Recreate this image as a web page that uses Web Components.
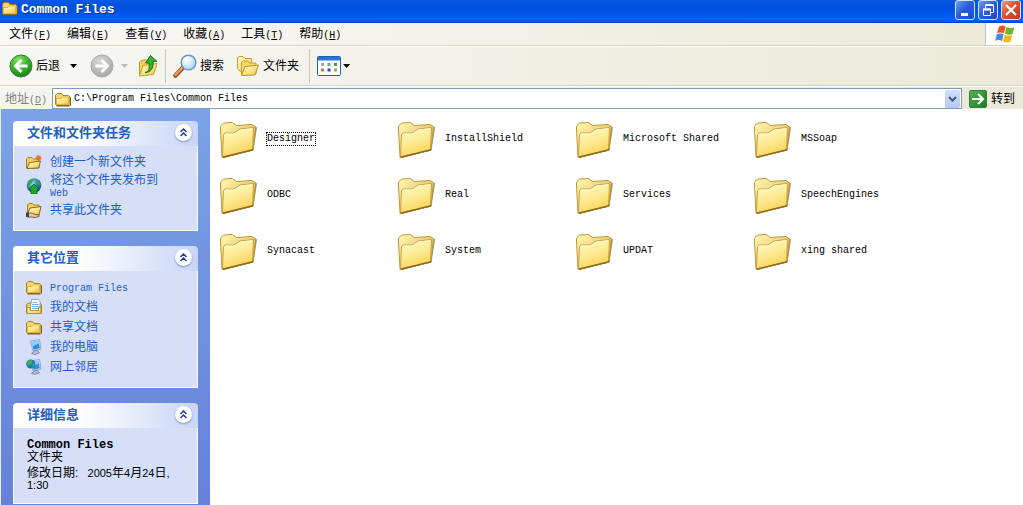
<!DOCTYPE html>
<html lang="zh-CN">
<head>
<meta charset="utf-8">
<title>Common Files</title>
<style>
  body { margin: 0; background: #fff; font: 12px/12px "Liberation Sans", "Noto Sans CJK SC", sans-serif; color: #000; }
</style>
</head>
<body>
<xp-window></xp-window>

<script>
const base = `
  * { box-sizing: border-box; }
  button { font: inherit; color: inherit; background: none; border: 0; padding: 0; margin: 0; }
  a { color: inherit; text-decoration: none; }
  .m { font: 10px/1px "Liberation Mono", monospace; }
`;

function define(name, css, html) {
  customElements.define(name, class extends HTMLElement {
    constructor() {
      super();
      const root = this.attachShadow({ mode: 'open' });
      const view = typeof html === 'function' ? html(this) : html;
      root.innerHTML = `<style>${base}${css}</style>${view}`;
    }
  });
}

/* ---------- icon library ---------- */
const yellow = `<linearGradient id="y" x1="0" y1="0" x2="1" y2="1"><stop offset="0" stop-color="#fffbc8"/><stop offset=".5" stop-color="#fbe58a"/><stop offset="1" stop-color="#efc04a"/></linearGradient>`;
const smallFolder = `<path d="M.5 13.500V4.200L2 2.500h4.500L8 4.500h5.500L15 6v7.500l-1 1H1.500z" fill="#f6d66a" stroke="#a8801c"/><path d="M1.500 13.500V7.500h4.500l1.500-1.500h6V13.500z" fill="url(#y)" stroke="#d5a83a" stroke-width=".8"/><path d="M1.500 15H14.500l1-1V6.500" fill="none" stroke="#75591a"/>`;
const computer = `<path d="M4.500 2l9-1.500 1.500 9.500-8 2z" fill="#dfe8f5" stroke="#8796b5" stroke-width=".8"/><path d="M5.800 3l6.800-1.200 1.200 7.400-6.300 1.500z" fill="#2a8be8"/><path d="M5.800 3l6.800-1.200.4 2.500L6.500 7.500z" fill="#8fd0ff"/><path d="M8.500 12l3-.8 1 1.500 1 1.300-5 1.500-3-1.200z" fill="#b9bdd2" stroke="#686f92" stroke-width=".7"/>`;
const icons = {
  folder: [16, 16, yellow + smallFolder],
  bigFolder: [38, 38, `
    <linearGradient id="b" x1="0" y1="0" x2=".4" y2="1"><stop offset="0" stop-color="#fffbc4"/><stop offset=".5" stop-color="#ffed9b"/><stop offset="1" stop-color="#f9d45c"/></linearGradient>
    <linearGradient id="k" x1="0" y1="0" x2="1" y2="1"><stop offset="0" stop-color="#fff9b4"/><stop offset="1" stop-color="#dca93a"/></linearGradient>
    <path d="M4 38L34.500 30.500L38 7.500L36 6L34 28z" fill="#6c6140" opacity=".65"/>
    <path d="M3 37L1.500 10V6.500L4.500 3L13.500 2.500L17.500 5.500L33 4.500L36.500 7L34 29.500L5 37.500z" fill="url(#k)" stroke="#b28d2c" stroke-width=".9"/>
    <path d="M3.500 37L4.500 15L6 13H15L21 9L34.500 7.500L33.500 30z" fill="url(#b)" stroke="#c59a33" stroke-width=".9"/>
    <path d="M5.500 15.500L6.500 14H15.500L21.500 10L33 8.800" fill="none" stroke="#fffde0"/>
    <path d="M3.500 37.200L33 30L34 29" fill="none" stroke="#8c6c1c" stroke-width="1.400"/>`],
  back: [24, 24, `
    <radialGradient id="g" cx=".4" cy=".25" r=".8"><stop offset="0" stop-color="#8be26b"/><stop offset=".5" stop-color="#3eb42c"/><stop offset="1" stop-color="#15791a"/></radialGradient>
    <circle cx="12" cy="12" r="11" fill="url(#g)" stroke="#35843a"/><path d="M18.500 12H7M12.500 6L6.500 12l6 6" fill="none" stroke="#fff" stroke-width="2.800"/>`],
  forward: [24, 24, `
    <radialGradient id="g" cx=".4" cy=".3" r=".8"><stop offset="0" stop-color="#d8d8d6"/><stop offset="1" stop-color="#a3a3a1"/></radialGradient>
    <circle cx="12" cy="12" r="11" fill="url(#g)" stroke="#aaa"/><path d="M5.500 12H17M11.500 6l6 6-6 6" fill="none" stroke="#fff" stroke-width="2.800"/>`],
  up: [20, 24, yellow + `
    <path d="M1.500 21V8l3-2h4l2 2h5v12z" fill="#f3cf5c" stroke="#c59a33"/><path d="M1.500 22L5 11.500l14-2L15.500 20.500z" fill="url(#y)" stroke="#c99c30"/>
    <path d="M7 18.500c4-.5 4.500-4 4-9.500H7.500L12.500 1.500l6.500 6h-4c.5 7-2 11-8 11z" fill="#35b52c" stroke="#187516"/>`],
  search: [24, 24, `
    <radialGradient id="l" cx=".4" cy=".35" r=".7"><stop offset="0" stop-color="#fff"/><stop offset="1" stop-color="#a5d6f8"/></radialGradient>
    <path d="M2.500 21.500L10 13.500" stroke="#8f4f27" stroke-width="4.500" stroke-linecap="round"/><path d="M2.500 20.800L9.500 13.500" stroke="#eb9a5c" stroke-width="2.500" stroke-linecap="round"/>
    <circle cx="15.500" cy="8.500" r="7.300" fill="url(#l)" stroke="#6f93c4" stroke-width="1.500"/><path d="M10.500 7q1.500-3.500 5-3.500" fill="none" stroke="#fff" stroke-width="1.500"/>`],
  folders: [24, 24, yellow + `
    <path d="M1.500 15V4L3 2.500h4l2 2h6.500V15L5 18z" fill="url(#y)" stroke="#c99c30"/>
    <path d="M5.500 20.500V8.500L7 7h4.500l2 2H20v11z" fill="#f7d869" stroke="#c99c30"/><path d="M5.500 21.500L9 12.500l13.500-1.500-3.500 10z" fill="url(#y)" stroke="#c0922a"/>`],
  views: [24, 20, `
    <rect x=".5" y=".5" width="23" height="19" rx="1" fill="#fff" stroke="#1c5fb5"/><path d="M1 1h22v3.500H1z" fill="#2b74d6"/>
    <path d="M4 7h3v3H4z" fill="#93a8c8"/><path d="M10.500 7h3v3h-3z" fill="#7aa98a"/><path d="M17 7h3v3h-3z" fill="#38a048"/>
    <path d="M4 12.500h3v3H4z" fill="#e0684e"/><path d="M10.500 12.500h3v3h-3z" fill="#1e4fa8"/><path d="M17 12.500h3v3h-3z" fill="#c0a02c"/>`],
  go: [18, 18, `
    <linearGradient id="g" x1="0" y1="0" x2="1" y2="1"><stop offset="0" stop-color="#54b655"/><stop offset="1" stop-color="#167b1e"/></linearGradient>
    <rect x=".5" y=".5" width="17" height="17" rx="1.500" fill="url(#g)" stroke="#2f8038"/><path d="M3 9h10M9 4l5 5-5 5" fill="none" stroke="#fff" stroke-width="2.200"/>`],
  flag: [20, 18, `
    <path d="M4 1.500q4-2 6.500.2L9 8.500Q6 6.500 2 8.200z" fill="#e8562a"/><path d="M11.500 2q3.500 2 8 .2L17.500 9q-4 1.500-7.500-.2z" fill="#6fb52c"/>
    <path d="M1.700 9.500q4-2 6.900 0L7 16Q4 14.200.2 15.800z" fill="#4a8be0"/><path d="M9.700 9.800q3.500 1.800 7.500.3L15.500 16.800q-4 1.500-7.500-.4z" fill="#f5b81c"/>`],
  newFolder: [16, 16, yellow + `
    <path d="M.5 14V5L2 3.500h4L7.500 5H13v9z" fill="#f3cf5c" stroke="#a8801c"/><path d="M1 14.500L3.500 8.500l11-1.500-2 7z" fill="url(#y)" stroke="#8c6a18"/>
    <path d="M12.500 1v6M9.500 4h6M10.500 2l4 4M14.500 2l-4 4" stroke="#f0722a" stroke-width="1.300"/>`],
  publish: [16, 16, `
    <radialGradient id="o" cx=".35" cy=".3" r=".8"><stop offset="0" stop-color="#b5ecff"/><stop offset=".45" stop-color="#3188c7"/><stop offset="1" stop-color="#123d80"/></radialGradient>
    <circle cx="8" cy="7.500" r="7.300" fill="url(#o)"/><path d="M1 7q1-5 5-6l2 1-2 3-3 3zM10 1.500q4 1 5 6l-3-1z" fill="#36a848"/>
    <path d="M8 6l5.500 5.500H11V16H5v-4.500H2.500z" fill="#22a62c" stroke="#0b6b18" stroke-width=".8"/>`],
  share: [16, 16, yellow + `
    <path d="M1.500 11V3L3 1.500h3.500L8 3h5v8z" fill="#f3cf5c" stroke="#a8801c"/><path d="M1.500 12L4 6l11-1.500-2 8.500z" fill="url(#y)" stroke="#8c6a18"/>
    <path d="M1 11h5l3 1.500 4 .5v1.500l-4 1-4-.5H1z" fill="#f0c8a0" stroke="#5d4632" stroke-width=".8"/><path d="M0 10.500h3V15H0z" fill="#3c4552"/>`],
  docs: [16, 16, yellow + `
    <path d="M.5 14V5.500L3 4h11l1.500 2v8z" fill="#f3cf5c" stroke="#a8801c"/><path d="M5.500 .5h6.500l2 2v10H4z" fill="#fff" stroke="#6e93bd" stroke-width=".8"/>
    <path d="M6.500 3.500h5M6 5.500h6.500M6 7.500h6.500M6 9.500h6" stroke="#77b0e2"/><path d="M1 14.500V8.500h3v3h8.500v-3H15v6z" fill="url(#y)" stroke="#a8801c" stroke-width=".8"/>`],
  computer: [16, 16, computer],
  network: [16, 16, computer + `<circle cx="4.800" cy="5" r="4.600" fill="#2275bd"/><path d="M1 4q2-4 4.500-3l1 2-2 3-2.500.5zM6.500 5l2.500 0-2 4z" fill="#3cb54a"/>`],
};
customElements.define('xp-icon', class extends HTMLElement {
  connectedCallback() {
    if (this.shadowRoot) return;
    const [w, h, art] = icons[this.getAttribute('name')];
    this.attachShadow({ mode: 'open' }).innerHTML =
      `<style>:host{display:block;flex:none}svg{display:block}</style><svg width="${w}" height="${h}" viewBox="0 0 ${w} ${h}" aria-hidden="true">${art}</svg>`;
  }
});

/* ---------- title bar ---------- */
define('xp-titlebar', `
  :host { display: flex; align-items: flex-start; height: 23px; padding: 0 2px;
    background: linear-gradient(#0a5ae8 0, #0150dd 30%, #0257f0 65%, #0162fb 88%, #0140c4 100%); }
  h1 { flex: 1; margin: 0; padding: 4px 0 0 3px; font: bold 13px/12px "Liberation Mono", monospace; color: #fff; text-shadow: 1px 1px #0a2f8c; }
  .box { display: flex; gap: 3px; }
  button { width: 20px; height: 20px; border: 1px solid #d5e2fb; border-radius: 3px; background: linear-gradient(135deg, #6f9bf5, #2a5ede 45%, #1d49c8); }
  button.x { background: linear-gradient(135deg, #ee9c80, #dc5130 45%, #c03a18); }
  svg { display: block; margin: 0 1px; }`, `
  <xp-icon name="folder"></xp-icon><h1>Common Files</h1>
  <div class="box">
    <button aria-label="最小化"><svg width="16" height="18"><path d="M4 12h7v3H4z" fill="#fff"/></svg></button>
    <button aria-label="还原"><svg width="16" height="18" fill="none" stroke="#fff"><path d="M5.500 7V4.500h8v7H11M5.500 3.500h8M3.500 8h7v6.500h-7z"/><path d="M3 8.500h8" stroke-width="2"/></svg></button>
    <button class="x" aria-label="关闭"><svg width="16" height="18"><path d="M3 4l10 10M13 4L3 14" stroke="#fff" stroke-width="2.200"/></svg></button>
  </div>`);

/* ---------- menu bar ---------- */
define('xp-menubar', `
  :host { display: flex; height: 23px; border-bottom: 1px solid #d8d2bd; background: linear-gradient(90deg, #f9f9f7, #ece9d8); }
  nav { flex: 1; display: flex; gap: 16px; padding-left: 9px; align-items: center; }
  button { white-space: nowrap; }
  .logo { width: 38px; display: grid; place-items: center; background: #fff; border-left: 1px solid #c9c5b2; }`,
  `<nav>${[['文件','F'],['编辑','E'],['查看','V'],['收藏','A'],['工具','T'],['帮助','H']]
    .map(([t, k]) => `<button>${t}<span class="m">(<u>${k}</u>)</span></button>`).join('')}</nav>
  <div class="logo"><xp-icon name="flag"></xp-icon></div>`);

/* ---------- toolbar ---------- */
define('xp-toolbar', `
  :host { display: flex; align-items: center; height: 40px; padding-left: 9px; border-top: 1px solid #fff; border-bottom: 1px solid #d8d2bd;
    background: linear-gradient(90deg, #f7f7f4, #ece9d8); }
  button { display: flex; align-items: center; gap: 3px; white-space: nowrap; }
  .drop { width: 7px; height: 4px; background: #000; clip-path: polygon(0 0, 100% 0, 50% 100%); }
  .after { margin: 0 13px 0 10px; }
  .off { background: #bbb; margin: 0 10px 0 7px; }
  hr { width: 1px; height: 34px; margin: 0 7px; border: 0; background: #cbc7b4; }
  .folders { margin: 0 3px 0 12px; }
  .views { gap: 2px; }`, `
  <button><xp-icon name="back"></xp-icon>后退</button><button class="drop after" aria-label="后退列表"></button>
  <button aria-label="前进"><xp-icon name="forward"></xp-icon></button><button class="drop off" aria-label="前进列表"></button>
  <button aria-label="向上"><xp-icon name="up"></xp-icon></button><hr>
  <button><xp-icon name="search"></xp-icon>搜索</button>
  <button class="folders"><xp-icon name="folders"></xp-icon>文件夹</button><hr>
  <button class="views" aria-label="查看"><xp-icon name="views"></xp-icon><span class="drop"></span></button>`);

/* ---------- address bar ---------- */
define('xp-addressbar', `
  :host { display: flex; align-items: center; height: 23px; padding: 1px 8px 0 5px; border-top: 1px solid #fff; background: linear-gradient(90deg, #f4f4f0, #ece9d8); }
  label { color: #83817a; white-space: nowrap; margin-right: 5px; }
  .field { flex: 1; display: flex; align-items: center; height: 21px; padding: 0 1px 0 2px; background: #fff; border: 1px solid #7f9db9; }
  input { flex: 1; min-width: 0; border: 0; padding: 1px 0 0 3px; outline: 0; background: none; color: #000; font: 10px/16px "Liberation Mono", monospace; }
  .pick { width: 15px; height: 18px; background: linear-gradient(#d0defc, #b4c8f6); border-radius: 2px; display: grid; place-items: center; }
  .go { display: flex; align-items: center; gap: 4px; margin-left: 7px; white-space: nowrap; }`, `
  <label for="address">地址<span class="m">(<u>D</u>)</span></label>
  <div class="field"><xp-icon name="folder"></xp-icon><input id="address" type="text" value="C:\\Program Files\\Common Files">
    <button class="pick" aria-label="地址列表"><svg width="9" height="6"><path d="M1 1l3.500 3.500L8 1" fill="none" stroke="#42597f" stroke-width="2"/></svg></button></div>
  <button class="go"><xp-icon name="go"></xp-icon>转到</button>`);

/* ---------- sidebar ---------- */
define('xp-panel', `
  :host { display: block; }
  header { display: flex; align-items: center; justify-content: space-between; height: 25px; padding: 0 6px 2px 14px;
    border-radius: 4px 4px 0 0; background: linear-gradient(90deg, #fff 35%, #c9d5f7); }
  h2 { margin: 0; font-size: 13px; line-height: 16px; color: #215dc6; }
  button { width: 17px; height: 17px; border-radius: 50%; background: #fff; box-shadow: 0 1px 2px #7d8fc0; display: grid; place-items: center; }
  section { padding: 8px 12px 12px; background: #d6dff7; border: 1px solid #fff; border-top: 0; }`,
  el => `<header><h2>${el.getAttribute('heading')}</h2><button aria-label="折叠"><svg width="9" height="9"><path d="M1.500 4l3-3 3 3M1.500 8l3-3 3 3" fill="none" stroke="#1c3f94" stroke-width="1.500"/></svg></button></header>
  <section><slot></slot></section>`);

define('xp-task', `
  :host { display: block; color: #215dc6; }
  :host(:not(:last-child)) { margin-bottom: 4px; }
  a { display: flex; align-items: center; gap: 8px; min-height: 16px; }`,
  el => `<a href="#"><xp-icon name="${el.getAttribute('icon')}"></xp-icon><span><slot></slot></span></a>`);

define('xp-sidebar', `
  :host { display: block; padding: 12px 12px 2px; border-left: 1px solid #e5ebf8; background: linear-gradient(#7ba2e7, #6581da); }
  xp-panel:not(:last-child) { margin-bottom: 15px; }
  .info { padding: 2px 0 0 1px; }
  .info p { margin: 0 0 4px; }
  .info p:last-child { margin: 0; font-size: 11px; }
  .info .zh { font-size: 12px; line-height: 1px; }
  b { font: bold 12px/12px "Liberation Mono", monospace; }`, `
  <xp-panel heading="文件和文件夹任务">
    <xp-task icon="newFolder">创建一个新文件夹</xp-task>
    <xp-task icon="publish">将这个文件夹发布到<br><span class="m">Web</span></xp-task>
    <xp-task icon="share">共享此文件夹</xp-task>
  </xp-panel>
  <xp-panel heading="其它位置">
    <xp-task icon="folder"><span class="m">Program Files</span></xp-task>
    <xp-task icon="docs">我的文档</xp-task>
    <xp-task icon="folder">共享文档</xp-task>
    <xp-task icon="computer">我的电脑</xp-task>
    <xp-task icon="network">网上邻居</xp-task>
  </xp-panel>
  <xp-panel heading="详细信息">
    <div class="info"><p><b>Common Files</b><br>文件夹</p>
    <p><span class="zh">修改日期:</span>&nbsp;&nbsp; 2005<span class="zh">年</span>4<span class="zh">月</span>24<span class="zh">日</span>,<br>1:30</p></div>
  </xp-panel>`);

/* ---------- folder view ---------- */
define('xp-folder', `
  :host { display: flex; }
  a { display: flex; align-items: center; gap: 9px; white-space: nowrap; }
  span { border: 1px solid transparent; line-height: 12px; }
  span.m { line-height: 12px; }
  :host([focused]) span { border: 1px dotted #000; }`,
  `<a href="#"><xp-icon name="bigFolder"></xp-icon><span class="m"><slot></slot></span></a>`);

define('xp-files', `
  :host { display: grid; grid-template-columns: repeat(auto-fill, 178px); align-content: start; row-gap: 18px; padding: 11px 0 0 9px; background: #fff; }`,
  ['Designer','InstallShield','Microsoft Shared','MSSoap','ODBC','Real','Services','SpeechEngines','Synacast','System','UPDAT','xing shared']
    .map((n, i) => `<xp-folder${i ? '' : ' focused'}>${n}</xp-folder>`).join(''));

define('xp-window', `
  :host { display: flex; flex-direction: column; min-height: 100vh; }
  main { flex: 1; display: grid; grid-template-columns: 210px minmax(0, 1fr); }`, `
  <xp-titlebar></xp-titlebar><xp-menubar></xp-menubar><xp-toolbar></xp-toolbar><xp-addressbar></xp-addressbar>
  <main><xp-sidebar></xp-sidebar><xp-files></xp-files></main>`);
</script>
</body>
</html>
